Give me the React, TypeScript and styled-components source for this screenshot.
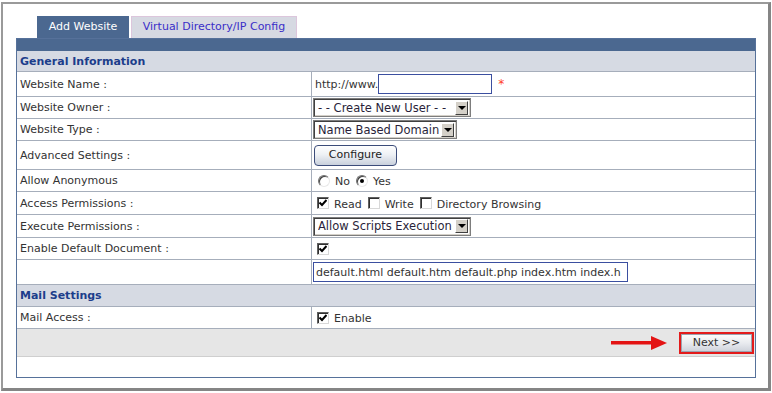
import React from "react";
import styled, { createGlobalStyle } from "styled-components";

const Global = createGlobalStyle`
  html, body { margin: 0; padding: 0; background: #fff; }
  body {
    font-family: "DejaVu Sans", Verdana, sans-serif;
    font-size: 11px;
    color: #333;
  }
  * { box-sizing: border-box; }
`;

const LINE = "#a6aebb";
const BLUE = "#4b6890";

const Frame = styled.div`
  margin: 2px 0 0 1px;
  width: 770px;
  border-style: solid;
  border-width: 2px 3px 3px 2px;
  border-color: #9a9a9a #858585 #858585 #9a9a9a;
  padding: 12px 12px 10px 13px;
`;

const TabBar = styled.div`
  display: flex;
  gap: 2px;
  margin-left: 21px;
  height: 22px;
`;

const Tab = styled.div<{ $active?: boolean; $w: number }>`
  width: ${(p) => p.$w}px;
  height: 22px;
  display: flex;
  align-items: center;
  justify-content: center;
  padding-bottom: 2px;
  background: ${(p) => (p.$active ? BLUE : "#d6d9e2")};
  color: ${(p) => (p.$active ? "#fff" : "#3a2fc8")};
  border: 1px solid ${(p) => (p.$active ? BLUE : "#dcc6dc")};
  border-bottom: none;
`;

const Panel = styled.div`
  width: 740px;
  border: 1px solid #56719a;
`;

const PanelBar = styled.div`
  height: 12px;
  background: ${BLUE};
`;

const SectionHeader = styled.div<{ $h: number }>`
  height: ${(p) => p.$h}px;
  display: flex;
  align-items: center;
  padding-left: 3px;
  background: #d6dae3;
  border-bottom: 1px solid ${LINE};
  color: #1c3d8b;
  font-weight: bold;
`;

const Row = styled.div<{ $h: number }>`
  display: grid;
  grid-template-columns: 295px 1fr;
  height: ${(p) => p.$h}px;
  border-bottom: 1px solid ${LINE};
`;

const Label = styled.div`
  display: flex;
  align-items: center;
  padding-left: 3px;
  border-right: 1px solid ${LINE};
`;

const Field = styled.div<{ $pl?: number }>`
  display: flex;
  align-items: center;
  padding-left: ${(p) => p.$pl ?? 1}px;
`;

const Prefix = styled.span`
  margin-left: 2px;
`;

const TextInput = styled.div<{ $w: number }>`
  width: ${(p) => p.$w}px;
  height: 20px;
  border: 1px solid #3b4fa0;
  background: #fff;
  display: flex;
  align-items: center;
  padding-left: 2px;
  overflow: hidden;
  white-space: nowrap;
  font-size: 11px;
`;

const Required = styled.span`
  color: #ff3b1f;
  margin-left: 6px;
  font-size: 12px;
`;

const SelectBox = styled.div<{ $w: number }>`
  width: ${(p) => p.$w}px;
  height: 19px;
  display: flex;
  align-items: center;
  justify-content: space-between;
  gap: 2px;
  border: 1px solid #7d7d7d;
  box-shadow: inset 1px 1px 0 #404040, inset -1px -1px 0 #d4d0c8;
  background: #fff;
  padding: 0 2px 0 4px;
  color: #2a1f3a;
  font-size: 11.5px;
  white-space: nowrap;
`;

const SelectText = styled.span`
  overflow: hidden;
`;

const ArrowBtn = styled.span`
  flex-shrink: 0;
  width: 13px;
  height: 14px;
  background: #d4d0c8;
  border-style: solid;
  border-width: 1px;
  border-color: #fff #404040 #404040 #fff;
  display: flex;
  align-items: center;
  justify-content: center;
  &::after {
    content: "";
    border-left: 4px solid transparent;
    border-right: 4px solid transparent;
    border-top: 4px solid #000;
  }
`;

const ConfigButton = styled.button`
  width: 83px;
  height: 21px;
  border: 1px solid #3c4c7a;
  border-radius: 4px;
  background: linear-gradient(#ffffff, #eef1f5 45%, #c9d0dc);
  font-family: inherit;
  font-size: 11px;
  color: #222;
  padding: 0 0 1px;
  margin-left: 1px;
`;

const Option = styled.label`
  display: flex;
  align-items: center;
  margin-right: 6px;
`;

const OptionText = styled.span`
  margin-left: 5px;
  padding-top: 2px;
`;

const Radio = styled.span<{ $on?: boolean }>`
  width: 12px;
  height: 12px;
  border-radius: 50%;
  border: 1px solid;
  border-color: #707070 #e8e8e8 #e8e8e8 #707070;
  box-shadow: inset 1px 1px 0 #404040;
  background: #fff;
  display: flex;
  align-items: center;
  justify-content: center;
  &::after {
    content: "";
    display: ${(p) => (p.$on ? "block" : "none")};
    width: 4px;
    height: 4px;
    border-radius: 50%;
    background: #000;
  }
`;

const Box = styled.span`
  width: 12px;
  height: 12px;
  border: 1px solid;
  border-color: #606060 #d8d8d8 #d8d8d8 #606060;
  box-shadow: inset 1px 1px 0 #303030;
  background: #fff;
  display: flex;
  align-items: center;
  justify-content: center;
`;

const Footer = styled.div`
  height: 28px;
  background: #e6e6e6;
  border-bottom: 1px solid #cfcfcf;
  display: flex;
  align-items: center;
  justify-content: flex-end;
  gap: 12px;
  padding-right: 1px;
`;

const Highlight = styled.span`
  border: 2px solid #e31b1b;
  display: flex;
`;

const NextButton = styled.button`
  width: 71px;
  height: 18px;
  border: 1px solid #9ca3b0;
  background: linear-gradient(#fbfbfb, #e9ebef 50%, #cfd3db);
  font-family: inherit;
  font-size: 11px;
  color: #333;
  padding: 0;
`;

const Spacer = styled.div`
  height: 20px;
`;

const Check = ({ on }: { on?: boolean }) => (
  <Box>
    {on && (
      <svg width="8" height="8" viewBox="0 0 8 8">
        <path d="M0.5 3.5 L3 6 L7.5 1" fill="none" stroke="#000" strokeWidth="2" />
      </svg>
    )}
  </Box>
);

const Select = ({ w, text }: { w: number; text: string }) => (
  <SelectBox $w={w}>
    <SelectText>{text}</SelectText>
    <ArrowBtn />
  </SelectBox>
);

const RedArrow = () => (
  <svg width="56" height="16" viewBox="0 0 56 16">
    <rect x="0" y="6" width="42" height="3.5" fill="#e31313" />
    <polygon points="40,1 56,8 40,15" fill="#e31313" />
  </svg>
);

export default function App() {
  return (
    <>
      <Global />
      <Frame>
        <TabBar>
          <Tab $active $w={92}>Add Website</Tab>
          <Tab $w={166}>Virtual Directory/IP Config</Tab>
        </TabBar>
        <Panel>
          <PanelBar />
          <SectionHeader $h={21}>General Information</SectionHeader>
          <Row $h={25}>
            <Label>Website Name :</Label>
            <Field $pl={1}>
              <Prefix>http://www.</Prefix>
              <TextInput $w={114} />
              <Required>*</Required>
            </Field>
          </Row>
          <Row $h={22}>
            <Label>Website Owner :</Label>
            <Field>
              <Select w={158} text="- - Create New User - -" />
            </Field>
          </Row>
          <Row $h={22}>
            <Label>Website Type :</Label>
            <Field>
              <Select w={144} text="Name Based Domain" />
            </Field>
          </Row>
          <Row $h={29}>
            <Label>Advanced Settings :</Label>
            <Field>
              <ConfigButton>Configure</ConfigButton>
            </Field>
          </Row>
          <Row $h={22}>
            <Label>Allow Anonymous</Label>
            <Field $pl={6}>
              <Option>
                <Radio />
                <OptionText>No</OptionText>
              </Option>
              <Option>
                <Radio $on />
                <OptionText>Yes</OptionText>
              </Option>
            </Field>
          </Row>
          <Row $h={23}>
            <Label>Access Permissions :</Label>
            <Field $pl={5}>
              <Option>
                <Check on />
                <OptionText>Read</OptionText>
              </Option>
              <Option>
                <Check />
                <OptionText>Write</OptionText>
              </Option>
              <Option>
                <Check />
                <OptionText>Directory Browsing</OptionText>
              </Option>
            </Field>
          </Row>
          <Row $h={23}>
            <Label>Execute Permissions :</Label>
            <Field>
              <Select w={158} text="Allow Scripts Execution" />
            </Field>
          </Row>
          <Row $h={22}>
            <Label>Enable Default Document :</Label>
            <Field $pl={5}>
              <Check on />
            </Field>
          </Row>
          <Row $h={25}>
            <Label />
            <Field>
              <TextInput $w={315}>default.html default.htm default.php index.htm index.h</TextInput>
            </Field>
          </Row>
          <SectionHeader $h={22}>Mail Settings</SectionHeader>
          <Row $h={22}>
            <Label>Mail Access :</Label>
            <Field $pl={5}>
              <Option>
                <Check on />
                <OptionText>Enable</OptionText>
              </Option>
            </Field>
          </Row>
          <Footer>
            <RedArrow />
            <Highlight>
              <NextButton>Next &gt;&gt;</NextButton>
            </Highlight>
          </Footer>
          <Spacer />
        </Panel>
      </Frame>
    </>
  );
}
